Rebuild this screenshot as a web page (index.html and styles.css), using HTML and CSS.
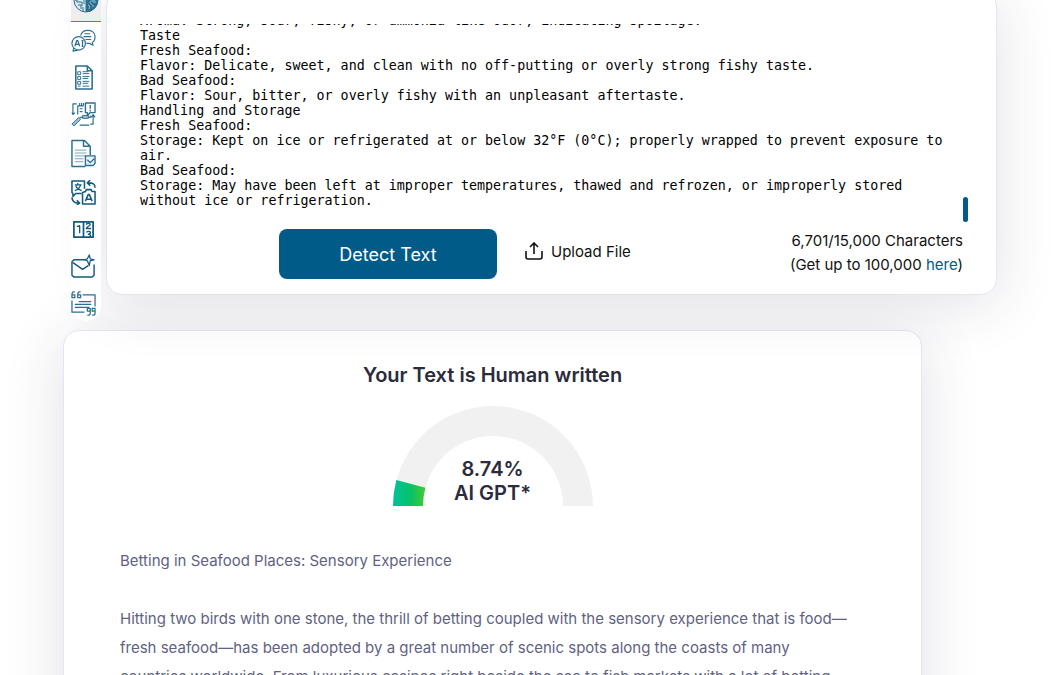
FILE: index.html
```html
<!DOCTYPE html>
<html lang="en">
<head>
    <meta charset="UTF-8">
    <meta name="viewport" content="width=device-width, initial-scale=1.0">
    <title>AI Detector</title>
    <link rel="stylesheet" href="styles.css">
</head>
<body>
    <div class="page">
        <div class="detector">
            <nav class="tools">
                <a href="#" class="tool active" aria-label="AI detector">
                    <svg viewBox="0 0 26 26">
                        <circle cx="13" cy="13" r="12" fill="#dce8ee"/>
                        <path d="M13 1a12 12 0 0 1 0 24z" fill="#2b6e92" stroke="none"/>
                        <path d="M13 2v22M11 4v5H7v4M4 10v5h5v4M11 12v5M5 18h3v4M10 20v4M2 13h2M7 6v3"/>
                        <path d="M15 5c3-2 4 1 3 3s4 1 4 4-4 1-5 3 4 2 3 5M15 10h2M20 15h3M15 18c2 0 2 2 1 4" stroke="#9cc5dc"/>
                    </svg>
                </a>
                <a href="#" class="tool" aria-label="AI chat">
                    <svg viewBox="0 0 26 26">
                        <path d="M10 8C12 0 25 1 25 9c0 3-1 5-3 6l1 3-4-2h-3" stroke-width="1.2"/>
                        <circle cx="8" cy="16" r="7" stroke-width="1.2"/>
                        <path d="M3 21l-1 3 5-1M14 6h6M13 9h8M15 12h6" stroke-width="1.2"/>
                        <path d="M4 19l2-6h1l2 6M5 17h3M12 13v6M11 13h2M11 19h2" stroke-width="1.3"/>
                    </svg>
                </a>
                <a href="#" class="tool" aria-label="Document report">
                    <svg viewBox="0 0 26 26">
                        <path d="M5 1h12l5 5v19H5zM17 1v5h5" stroke-width="1.6"/>
                        <path d="M7 7h3v3H7zM7 12h3v3H7zM7 17h3v3H7zM7 22h3M12 7h6M12 9h7M12 12h7M12 14h6M12 17h7M12 19h6M12 22h7"/>
                    </svg>
                </a>
                <a href="#" class="tool" aria-label="Content analysis">
                    <svg viewBox="0 0 26 26">
                        <path d="M15 1h10v10h-5l-3 3v-3h-2zM20 3v4M20 8v2" stroke-width="1.4"/>
                        <path d="M13 4H7v9M9 16h11v-2M9 4V1M11 4V1M13 4V1M9 7h3M9 10h3M6 2H2v10M1 11l1 2 2-2M23 14v9h-3M21 16l2-3 2 3M9 24h10" stroke-width="1.2"/>
                        <path d="M1 23l7-7 2 2-7 7zM12 14h6v3h-6z" fill="#9fc0d0"/>
                    </svg>
                </a>
                <a href="#" class="tool tall" aria-label="Proofread">
                    <svg viewBox="0 0 26 29">
                        <path d="M15 28H1V1h13l6 6v9M13 1v6h6" stroke-width="1.5"/>
                        <path d="M4 11h12M4 14h12M4 17h11M4 20h9M4 23h9" stroke="#75a2b9"/>
                        <path d="M15 17h10v8l-2 2h-8zM17 21l3 3 4-4" stroke-width="1.4" fill="#e4f1f7"/>
                    </svg>
                </a>
                <a href="#" class="tool" aria-label="Translate">
                    <svg viewBox="0 0 26 26">
                        <g stroke="#145a7d" stroke-width="1.6">
                            <path d="M11 14H5l-3 3v-3L1 13V1h13v8"/>
                            <path d="M4 5h7M7 3v2M10 5c-1 4-3 5-6 6M5 6c1 3 3 4 6 5" stroke-width="1.3"/>
                            <path d="M12 13l3-1 1-2h5l1 2h3v13H12zM15 22l3-7h1l3 7M16 20h5"/>
                            <path d="M25 8c0-4-2-5-7-5M20 0l-3 3 3 3M1 18c0 4 2 6 7 6M6 21l3 3-3 2"/>
                        </g>
                    </svg>
                </a>
                <a href="#" class="tool" aria-label="Word counter">
                    <svg viewBox="0 0 26 26">
                        <g stroke="#145a7d" stroke-width="1.8">
                            <path d="M3 5h20v16H3zM13 5v16"/>
                            <path d="M6 10l3-1v8M16 8c0-2 4-2 4 0 0 1-4 2-4 4h5M16 16c2-2 5-1 4 1l-2 1c3 0 3 2 1 3" stroke-width="1.4"/>
                        </g>
                    </svg>
                </a>
                <a href="#" class="tool" aria-label="Email writer">
                    <svg viewBox="0 0 26 26">
                        <path d="M15 6H3L1 8v14l2 2h19l2-2V11M2 9l10 7 6-4" stroke="#145a7d" stroke-width="1.5"/>
                        <path d="M19 1l1 4 4 1-4 1-1 5-2-5-3-1 3-1z" stroke="#145a7d" stroke-width="1.3" fill="#fff"/>
                    </svg>
                </a>
                <a href="#" class="tool" aria-label="Citation generator">
                    <svg viewBox="0 0 26 26">
                        <path d="M12 4h13v12M1 10v12h13M8 11h13M4 14h17M4 17h15" stroke-width="1.3"/>
                        <path d="M4 1H2L1 3v4h3V4H1M10 1H8L7 3v4h3V4H7M20 21h-3v-3h3v6l-1 1h-2M25 21h-3v-3h3v6l-1 1h-2" stroke-width="1.3"/>
                    </svg>
                </a>
            </nav>
            <div class="card editor">
                <div class="text-area">
                    <textarea id="inputText" aria-label="Text to check" spellcheck="false">Aroma: Strong, sour, fishy, or ammonia-like odor, indicating spoilage.
Taste
Fresh Seafood:
Flavor: Delicate, sweet, and clean with no off-putting or overly strong fishy taste.
Bad Seafood:
Flavor: Sour, bitter, or overly fishy with an unpleasant aftertaste.
Handling and Storage
Fresh Seafood:
Storage: Kept on ice or refrigerated at or below 32°F (0°C); properly wrapped to prevent exposure to air.
Bad Seafood:
Storage: May have been left at improper temperatures, thawed and refrozen, or improperly stored without ice or refrigeration.</textarea>
                    <div class="scroll-thumb"></div>
                </div>
                <div class="actions">
                    <button type="button" class="detect">Detect Text</button>
                    <button type="button" class="upload">
                        <svg viewBox="0 0 18 18">
                            <path d="M1 9v6q0 2 2 2h12q2 0 2-2V9M9 12V1M5 5l4-4 4 4"/>
                        </svg>
                        Upload File
                    </button>
                    <p class="counter">6,701/15,000 Characters<br>(Get up to 100,000 <a href="#">here</a>)</p>
                </div>
            </div>
        </div>

        <div class="card result">
            <h2>Your Text is Human written</h2>
            <div class="gauge">
                <svg viewBox="0 0 200 100">
                    <defs>
                        <linearGradient id="score" x1="0" y1="0" x2="1" y2="0">
                            <stop offset="0" stop-color="#00c19c"/>
                            <stop offset="0.55" stop-color="#08c266"/>
                            <stop offset="1" stop-color="#45c933"/>
                        </linearGradient>
                    </defs>
                    <path d="M0 100a100 100 0 0 1 200 0h-30a70 70 0 0 0-140 0z" fill="#f1f1f1"/>
                    <path d="M0 100A100 100 0 0 1 3.4 74L32.4 81.8A70 70 0 0 0 30 100z" fill="url(#score)"/>
                </svg>
                <div class="gauge-label">8.74%<br>AI GPT*</div>
            </div>
            <div class="content">
                <p>Betting in Seafood Places: Sensory Experience</p>
                <p>Hitting two birds with one stone, the thrill of betting coupled with the sensory experience that is food—fresh seafood—has been adopted by a great number of scenic spots along the coasts of many countries worldwide. From luxurious casinos right beside the sea to fish markets with a lot of betting</p>
            </div>
        </div>
    </div>

    <script>
        // keep the end of the text in view
        const input = document.getElementById('inputText');
        input.scrollTop = input.scrollHeight;
    </script>
</body>
</html>
```
FILE: styles.css
```css
* {
    box-sizing: border-box;
}

body {
    margin: 0;
    background-color: #fff;
    font-family: Inter, "Liberation Sans", sans-serif;
    font-size: 15px;
    color: #111;
    overflow-x: hidden;
}

.page {
    height: 100vh;
    padding: 0 65px 0 63px;
    overflow: hidden;
}

.card {
    background-color: #fff;
    border: 1px solid #e4e4f4;
    border-radius: 16px;
    box-shadow: 0 8px 60px rgba(40, 40, 80, 0.14);
}

.detector {
    display: flex;
    gap: 5px;
    margin-top: -9px;
    padding-left: 8px;
}

/*------------tools-------------------*/
.tools {
    display: flex;
    flex-direction: column;
    gap: 12px;
    width: 30px;
    height: 330px;
    background-color: #fff;
    border-radius: 0 0 15px 15px;
    position: relative;
    z-index: 1;
}

.tool {
    display: block;
    height: 25px;
}

.tool.active {
    height: 31px;
    margin-bottom: -6px;
    background-color: #eee;
    border-bottom: 1px solid #1fb025;
}

.tool svg {
    display: block;
    width: 25px;
    height: 25px;
    fill: none;
    stroke: #2b6e8e;
    stroke-width: 1;
    stroke-linejoin: round;
}

.tool.active svg {
    width: 26px;
    height: 26px;
    margin: -4px 0 0 2px;
}

.tool.tall,
.tool.tall svg {
    height: 29px;
}

/*------------editor-------------------*/
.editor {
    flex: 1;
    align-self: flex-start;
    padding: 32px 28px 15px 31px;
}

.text-area {
    position: relative;
}

textarea {
    display: block;
    width: 100%;
    height: 198px;
    margin: 0;
    padding: 0 7px 14px 2px;
    border: none;
    outline: none;
    resize: none;
    overflow: hidden;
    background-color: #fff;
    color: #000;
    font-family: "DejaVu Sans Mono", monospace;
    font-size: 13.333px;
    line-height: 15px;
}

.scroll-thumb {
    position: absolute;
    right: 0;
    bottom: 0;
    width: 5px;
    height: 25px;
    border-radius: 3px;
    background-color: #005b88;
}

.actions {
    display: flex;
    align-items: flex-start;
    margin-top: 7px;
    padding: 0 5px 0 141px;
}

button {
    border: none;
    font-family: inherit;
    cursor: pointer;
}

.detect {
    width: 218px;
    height: 50px;
    border-radius: 8px;
    background-color: #005b88;
    color: #fff;
    font-size: 18px;
}

.upload {
    display: flex;
    align-items: center;
    gap: 8px;
    height: 44px;
    margin-left: 28px;
    padding: 0;
    background: none;
    color: #111;
    font-size: 15px;
}

.upload svg {
    width: 18px;
    height: 18px;
    fill: none;
    stroke: #111;
    stroke-width: 1.6;
}

.counter {
    margin: 0 0 0 auto;
    line-height: 24px;
    text-align: right;
}

.counter a {
    color: #005b88;
    text-decoration: none;
}

/*------------result-------------------*/
.result {
    margin: 9px 75px 0 0;
    padding: 32px 56px;
}

.result h2 {
    margin: 0;
    color: #2b2b3d;
    font-size: 20px;
    font-weight: 600;
    line-height: 24px;
    text-align: center;
}

.gauge {
    position: relative;
    width: 200px;
    margin: 19px auto 40px;
}

.gauge svg {
    display: block;
    width: 100%;
}

.gauge-label {
    position: absolute;
    left: 0;
    right: 0;
    bottom: 1px;
    color: #2b2b3d;
    font-size: 20px;
    font-weight: 600;
    line-height: 24px;
    text-align: center;
}

.content {
    padding-right: 8px;
}

.content p {
    margin: 0 0 29px;
    color: #5f6282;
    line-height: 29px;
}
```
